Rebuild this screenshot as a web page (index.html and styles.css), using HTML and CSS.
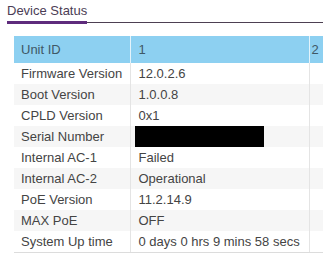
FILE: index.html
```html
<!DOCTYPE html>
<html lang="en">
<head>
  <meta charset="UTF-8">
  <title>Device Status</title>
  <link rel="stylesheet" href="styles.css">
</head>
<body>
  <div class="tabs">
    <span class="tab active">Device Status</span>
  </div>

  <div class="table-wrap">
    <table class="status">
      <colgroup>
        <col class="c-label">
        <col class="c-unit">
        <col class="c-unit2">
      </colgroup>
      <thead>
        <tr>
          <th>Unit ID</th>
          <th>1</th>
          <th class="narrow">2</th>
        </tr>
      </thead>
      <tbody>
        <tr><td>Firmware Version</td><td>12.0.2.6</td><td></td></tr>
        <tr><td>Boot Version</td><td>1.0.0.8</td><td></td></tr>
        <tr><td>CPLD Version</td><td>0x1</td><td></td></tr>
        <tr><td>Serial Number</td><td class="hidden-val"><span class="redact"></span></td><td></td></tr>
        <tr><td>Internal AC-1</td><td>Failed</td><td></td></tr>
        <tr><td>Internal AC-2</td><td>Operational</td><td></td></tr>
        <tr><td>PoE Version</td><td>11.2.14.9</td><td></td></tr>
        <tr><td>MAX PoE</td><td>OFF</td><td></td></tr>
        <tr><td>System Up time</td><td>0 days 0 hrs 9 mins 58 secs</td><td></td></tr>
      </tbody>
    </table>
  </div>
</body>
</html>
```

FILE: styles.css
```css
body {
  margin: 0;
  padding: 0 0 0 7px;
  font-family: "Liberation Sans", Arial, sans-serif;
  font-size: 13px;
  color: #444;
  background: #fff;
  overflow: hidden;
}

.tabs {
  display: flex;
  padding-top: 3px;
  border-bottom: 1px solid #4d4052;
}

.tab {
  display: inline-block;
  line-height: 15px;
  padding-bottom: 3px;
  margin-bottom: -2px;
  color: #4b3d55;
}

.tab.active {
  border-bottom: 3px solid #5e2b7c;
}

.table-wrap {
  margin: 13px 0 0 7px;
  overflow: hidden;
}

.status {
  border-collapse: collapse;
  table-layout: fixed;
  width: 445px;
}

.c-label { width: 116px; }
.c-unit { width: 179px; }
.c-unit2 { width: 150px; }

.status th {
  height: 27px;
  padding: 0 8px;
  background: #8dd0f1;
  color: #3f5866;
  font-weight: normal;
  text-align: left;
  border-left: 1px solid #e4f3fb;
}

.status th:first-child {
  padding-left: 7px;
  border-left: none;
}

.status th.narrow {
  padding-left: 2px;
}

.status td {
  height: 21px;
  padding: 0 8px;
  white-space: nowrap;
  border-left: 1px solid #e4e4e4;
}

.status td:first-child {
  padding-left: 7px;
  border-left: none;
}

.status tbody tr:nth-child(even) td {
  background: #f6f6f6;
}

.status tbody tr:last-child td {
  border-bottom: 1px solid #dcdcdc;
}

.status td.hidden-val {
  padding-left: 4px;
}

.redact {
  display: block;
  width: 129px;
  height: 21px;
  background: #000;
}
```
